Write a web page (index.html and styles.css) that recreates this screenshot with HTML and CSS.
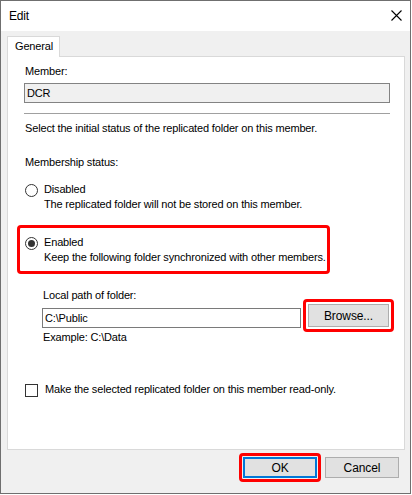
FILE: index.html
```html
<!DOCTYPE html>
<html>
<head>
<meta charset="utf-8">
<link rel="stylesheet" href="styles.css">
</head>
<body>
<div class="window">
  <div class="titlebar">
    <span class="title">Edit</span>
    <svg class="close" width="11" height="11" viewBox="0 0 11 11"><path d="M0.5 0.5 L10.5 10.5 M10.5 0.5 L0.5 10.5" stroke="#000" stroke-width="1.1" fill="none"/></svg>
  </div>
  <div class="content">
    <div class="tab">General</div>
    <div class="panel">
      <div class="line lbl">Member:</div>
      <div class="field-ro">DCR</div>
      <div class="sep"></div>
      <div class="line lbl select">Select the initial status of the replicated folder on this member.</div>
      <div class="line lbl status">Membership status:</div>
      <div class="opt opt-disabled">
        <div class="radio-row"><span class="radio"></span><span class="line">Disabled</span></div>
        <div class="line desc">The replicated folder will not be stored on this member.</div>
      </div>
      <div class="opt hl-box">
        <div class="radio-row"><span class="radio checked"></span><span class="line">Enabled</span></div>
        <div class="line desc">Keep the following folder synchronized with other members.</div>
      </div>
      <div class="line sub path-lbl">Local path of folder:</div>
      <div class="path-row">
        <div class="textbox">C:\Public</div>
        <div class="hl-btn"><div class="btn browse">Browse...</div></div>
      </div>
      <div class="line sub example">Example: C:\Data</div>
      <div class="check-row"><span class="checkbox"></span><span class="line">Make the selected replicated folder on this member read-only.</span></div>
    </div>
    <div class="footer">
      <div class="hl-btn ok-wrap"><div class="btn ok">OK</div></div>
      <div class="btn cancel">Cancel</div>
    </div>
  </div>
</div>
</body>
</html>
```
FILE: styles.css
```css
html, body {
  margin: 0;
  padding: 0;
  background: #ffffff;
}
body {
  font-family: "Liberation Sans", Arial, sans-serif;
  font-size: 11px;
  letter-spacing: -0.16px;
  color: #000;
}
.window {
  width: 411px;
  height: 494px;
  box-sizing: border-box;
  border: 1px solid #6f6f6f;
  display: flex;
  flex-direction: column;
  background: #f0f0f0;
}
.titlebar {
  height: 30px;
  flex: none;
  background: #fff;
  display: flex;
  align-items: center;
  justify-content: space-between;
  padding: 0 8px 0 8px;
}
.title {
  font-size: 12px;
  line-height: 15px;
}
.close {
  display: block;
  margin-top: -1px;
}
.content {
  flex: 1;
  padding: 5px 5px 0 6px;
  display: flex;
  flex-direction: column;
}
.tab {
  width: 53px;
  height: 21px;
  box-sizing: border-box;
  border: 1px solid #d9d9d9;
  border-bottom: 0;
  background: #fff;
  margin-bottom: -1px;
  position: relative;
  z-index: 1;
  padding: 2px 0 0 7px;
  line-height: 15px;
}
.panel {
  width: 398px;
  height: 394px;
  box-sizing: border-box;
  border: 1px solid #d9d9d9;
  background: #fff;
  padding-top: 7px;
}
.line {
  line-height: 15px;
  white-space: nowrap;
}
.lbl {
  padding-left: 17px;
}
.field-ro {
  margin: 4px 0 0 16px;
  width: 366px;
  height: 20px;
  box-sizing: border-box;
  border: 1px solid #838383;
  background: #f0f0f0;
  padding-left: 2px;
  line-height: 18px;
}
.sep {
  margin: 10px 0 0 16px;
  width: 366px;
  height: 1px;
  background: #a0a0a0;
}
.select {
  margin-top: 7px;
}
.status {
  margin-top: 19px;
}
.opt-disabled {
  margin-top: 12px;
  padding-left: 17px;
}
.radio-row {
  display: flex;
  align-items: center;
}
.radio {
  width: 13px;
  height: 13px;
  box-sizing: border-box;
  border: 1px solid #333;
  border-radius: 50%;
  background: #fff;
  margin: 1px 6px 0 0;
  display: flex;
  align-items: center;
  justify-content: center;
  flex: none;
}
.radio.checked::after {
  content: "";
  width: 7px;
  height: 7px;
  border-radius: 50%;
  background: #333;
}
.desc {
  padding-left: 19px;
}
.hl-box {
  margin: 13px 0 0 9px;
  width: 313px;
  box-sizing: border-box;
  border: 3px solid #f00;
  border-radius: 4px;
  padding: 7px 0 6px 5px;
}
.sub {
  padding-left: 35px;
}
.path-lbl {
  margin-top: 14px;
}
.path-row {
  display: flex;
  align-items: flex-end;
  margin-top: -4px;
  padding-left: 34px;
}
.textbox {
  width: 259px;
  height: 20px;
  box-sizing: border-box;
  border: 1px solid #7a7a7a;
  padding-left: 2px;
  line-height: 18px;
  margin-bottom: 4px;
}
.hl-btn {
  border: 3px solid #f00;
  border-radius: 4px;
  padding: 2px;
}
.path-row .hl-btn {
  margin-left: 2px;
}
.btn {
  box-sizing: border-box;
  background: #e1e1e1;
  border: 1px solid #adadad;
  text-align: center;
  display: flex;
  align-items: center;
  justify-content: center;
  font-size: 12px;
  letter-spacing: -0.1px;
}
.browse {
  width: 81px;
  height: 23px;
}
.example {
  margin-top: -2px;
}
.check-row {
  margin-top: 37px;
  padding-left: 17px;
  display: flex;
  align-items: center;
}
.checkbox {
  width: 13px;
  height: 13px;
  box-sizing: border-box;
  border: 1px solid #333;
  background: #fff;
  margin: 1px 7px 0 0;
  flex: none;
}
.footer {
  display: flex;
  justify-content: flex-end;
  align-items: center;
  margin: 3px 6px 0 0;
}
.ok-wrap {
  padding: 1px;
}
.ok {
  width: 74px;
  height: 21px;
  border: 2px solid #0078d7;
}
.cancel {
  width: 74px;
  height: 21px;
  margin-left: 4px;
}
```
